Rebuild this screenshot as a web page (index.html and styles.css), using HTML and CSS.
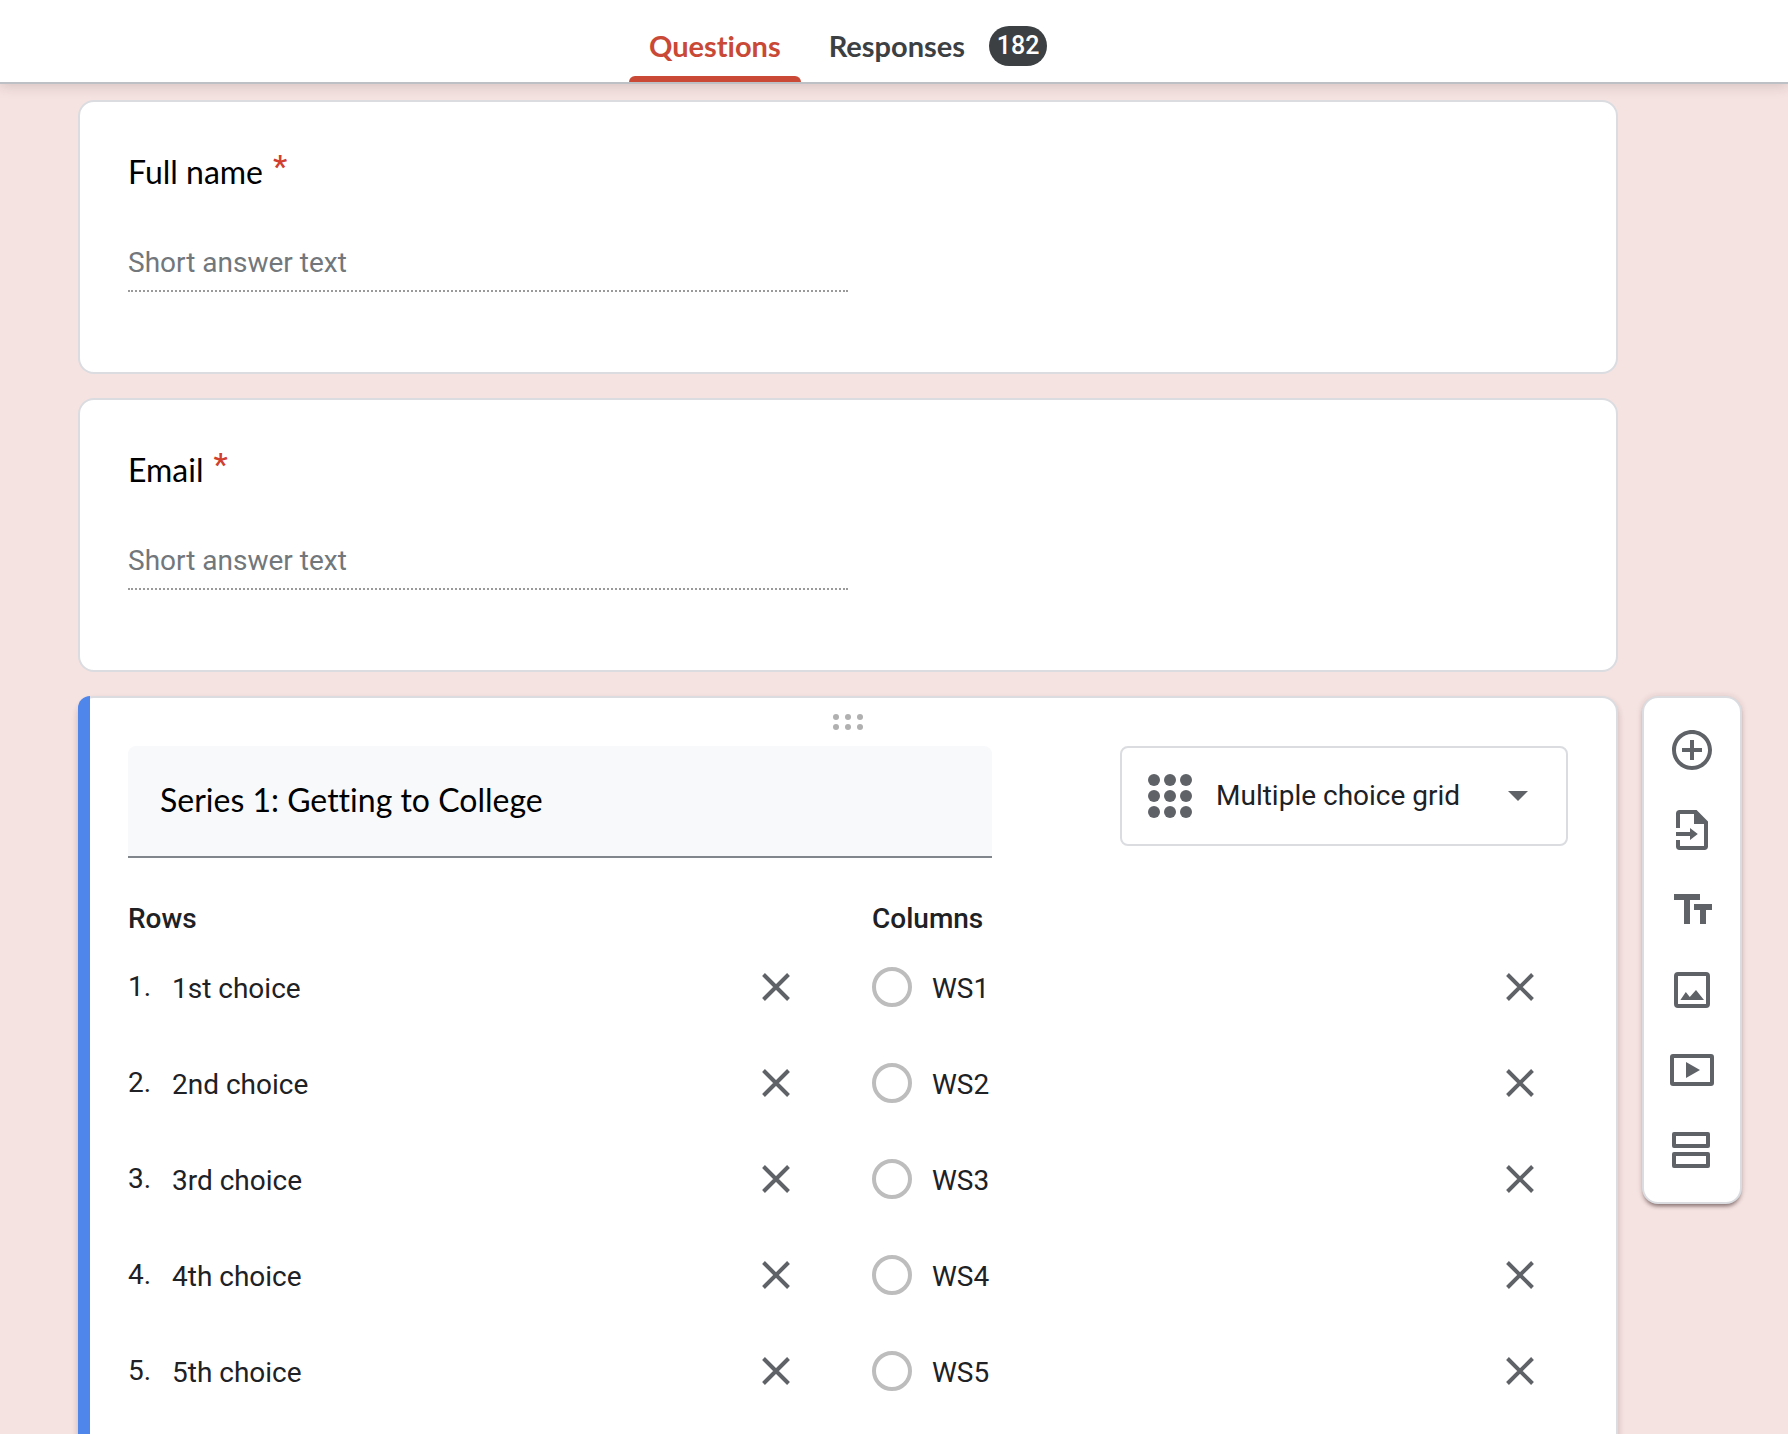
FILE: index.html
```html
<!DOCTYPE html>
<html lang="en">
<head>
<meta charset="utf-8">
<meta name="viewport" content="width=device-width, initial-scale=1">
<title>Form editor</title>
<link rel="stylesheet" href="styles.css">
</head>
<body>
<svg class="sprite" aria-hidden="true">
  <symbol id="close" viewBox="0 0 28 28"><path d="M1.500 1.500l25 25M26.500 1.500l-25 25" fill="none" stroke="currentColor" stroke-width="4"/></symbol>
</svg>

<header class="topbar">
  <nav class="tabs" aria-label="Form sections">
    <a class="tab tab-active" href="#questions" aria-current="page">Questions</a>
    <a class="tab" href="#responses">Responses <span class="badge">182</span></a>
  </nav>
</header>

<main class="editor" id="questions">
  <div class="cards">
    <section class="card">
      <label class="question" for="full-name">Full name <span class="required">*</span></label>
      <input class="short-answer" id="full-name" type="text" placeholder="Short answer text">
    </section>

    <section class="card">
      <label class="question" for="email">Email <span class="required">*</span></label>
      <input class="short-answer" id="email" type="text" placeholder="Short answer text">
    </section>

    <section class="card card-active">
      <button class="drag" type="button" aria-label="Move question">
        <svg width="30" height="16" viewBox="0 0 30 16" fill="#b0b0b0"><circle cx="3" cy="3" r="3"/><circle cx="15" cy="3" r="3"/><circle cx="27" cy="3" r="3"/><circle cx="3" cy="13" r="3"/><circle cx="15" cy="13" r="3"/><circle cx="27" cy="13" r="3"/></svg>
      </button>
      <div class="question-head">
        <input class="title-input" type="text" value="Series 1: Getting to College" aria-label="Question">
        <button class="type-picker" type="button" aria-haspopup="listbox">
          <svg width="44" height="44" viewBox="0 0 44 44" fill="#5f6368"><circle cx="6" cy="6" r="6"/><circle cx="22" cy="6" r="6"/><circle cx="38" cy="6" r="6"/><circle cx="6" cy="22" r="6"/><circle cx="22" cy="22" r="6"/><circle cx="38" cy="22" r="6"/><circle cx="6" cy="38" r="6"/><circle cx="22" cy="38" r="6"/><circle cx="38" cy="38" r="6"/></svg>
          <span class="type-name">Multiple choice grid</span>
          <svg width="20" height="10" viewBox="0 0 20 10" fill="#5f6368"><path d="M0 0h20L10 10z"/></svg>
        </button>
      </div>

      <div class="grid-options">
        <div class="option-list">
          <h2 class="list-title">Rows</h2>
          <div class="option"><span class="number">1.</span><input class="option-text" type="text" value="1st choice" aria-label="Row 1"><button class="remove" type="button" aria-label="Remove row 1"><svg><use href="#close"/></svg></button></div>
          <div class="option"><span class="number">2.</span><input class="option-text" type="text" value="2nd choice" aria-label="Row 2"><button class="remove" type="button" aria-label="Remove row 2"><svg><use href="#close"/></svg></button></div>
          <div class="option"><span class="number">3.</span><input class="option-text" type="text" value="3rd choice" aria-label="Row 3"><button class="remove" type="button" aria-label="Remove row 3"><svg><use href="#close"/></svg></button></div>
          <div class="option"><span class="number">4.</span><input class="option-text" type="text" value="4th choice" aria-label="Row 4"><button class="remove" type="button" aria-label="Remove row 4"><svg><use href="#close"/></svg></button></div>
          <div class="option"><span class="number">5.</span><input class="option-text" type="text" value="5th choice" aria-label="Row 5"><button class="remove" type="button" aria-label="Remove row 5"><svg><use href="#close"/></svg></button></div>
        </div>
        <div class="option-list">
          <h2 class="list-title">Columns</h2>
          <div class="option"><input class="radio" type="radio" name="column" aria-label="WS1"><input class="option-text" type="text" value="WS1" aria-label="Column 1"><button class="remove" type="button" aria-label="Remove column 1"><svg><use href="#close"/></svg></button></div>
          <div class="option"><input class="radio" type="radio" name="column" aria-label="WS2"><input class="option-text" type="text" value="WS2" aria-label="Column 2"><button class="remove" type="button" aria-label="Remove column 2"><svg><use href="#close"/></svg></button></div>
          <div class="option"><input class="radio" type="radio" name="column" aria-label="WS3"><input class="option-text" type="text" value="WS3" aria-label="Column 3"><button class="remove" type="button" aria-label="Remove column 3"><svg><use href="#close"/></svg></button></div>
          <div class="option"><input class="radio" type="radio" name="column" aria-label="WS4"><input class="option-text" type="text" value="WS4" aria-label="Column 4"><button class="remove" type="button" aria-label="Remove column 4"><svg><use href="#close"/></svg></button></div>
          <div class="option"><input class="radio" type="radio" name="column" aria-label="WS5"><input class="option-text" type="text" value="WS5" aria-label="Column 5"><button class="remove" type="button" aria-label="Remove column 5"><svg><use href="#close"/></svg></button></div>
        </div>
      </div>
    </section>
  </div>

  <aside class="toolbar" aria-label="Add to form">
    <button class="tool" type="button" aria-label="Add question">
      <svg viewBox="0 0 24 24"><path d="M13 7h-2v4H7v2h4v4h2v-4h4v-2h-4V7zm-1-5C6.480 2 2 6.480 2 12s4.480 10 10 10 10-4.480 10-10S17.520 2 12 2zm0 18c-4.410 0-8-3.590-8-8s3.590-8 8-8 8 3.590 8 8-3.590 8-8 8z"/></svg>
    </button>
    <button class="tool" type="button" aria-label="Import questions">
      <svg viewBox="0 0 24 24"><path d="M14.300 2H5.700C4.700 2 4 2.700 4 3.700V11h2V4h7v5h5v11H6v-3H4v3.300c0 1 .7 1.700 1.700 1.700h12.600c1 0 1.700-.7 1.700-1.700V7.800zM4 13h7v-2l3.900 3-3.900 3v-2H4z"/></svg>
    </button>
    <button class="tool" type="button" aria-label="Add title and description">
      <svg viewBox="0 0 24 24"><path d="M3 4v3h5v12h3V7h5V4zM13 9v3h3v7h3v-7h3V9z"/></svg>
    </button>
    <button class="tool" type="button" aria-label="Add image">
      <svg viewBox="0 0 24 24"><path fill-rule="evenodd" d="M5 3h14a2 2 0 0 1 2 2v14a2 2 0 0 1-2 2H5a2 2 0 0 1-2-2V5a2 2 0 0 1 2-2zm0 2v14h14V5zM6.200 17h11.800L14 12l-3.100 3.500L8.900 13z"/></svg>
    </button>
    <button class="tool" type="button" aria-label="Add video">
      <svg viewBox="0 0 24 24"><path fill-rule="evenodd" d="M2.500 4h19A1.500 1.500 0 0 1 23 5.500v13a1.500 1.500 0 0 1-1.500 1.500h-19A1.500 1.500 0 0 1 1 18.500v-13A1.500 1.500 0 0 1 2.500 4zM3 6v12h18V6zm6 2l7 4-7 4z"/></svg>
    </button>
    <button class="tool" type="button" aria-label="Add section">
      <svg viewBox="0 0 24 24"><path fill-rule="evenodd" d="M3 3h17a1 1 0 0 1 1 1v6a1 1 0 0 1-1 1H3a1 1 0 0 1-1-1V4a1 1 0 0 1 1-1zm1 2v4h15V5zM3 13h17a1 1 0 0 1 1 1v6a1 1 0 0 1-1 1H3a1 1 0 0 1-1-1v-6a1 1 0 0 1 1-1zm1 2v4h15v-4z"/></svg>
    </button>
  </aside>
</main>
</body>
</html>
```

FILE: styles.css
```css
* {
  box-sizing: border-box;
}

body {
  display: flex;
  flex-direction: column;
  height: 100vh;
  margin: 0;
  background: #f5e3e1;
  color: #202124;
  font-family: Roboto, "Liberation Sans", sans-serif;
  font-size: 28px;
  line-height: 40px;
}

button,
input {
  margin: 0;
  padding: 0;
  border: 0;
  background: none;
  color: inherit;
  font: inherit;
}

button {
  cursor: pointer;
}

svg {
  display: block;
}

.sprite {
  position: absolute;
  width: 0;
  height: 0;
}

/* Top bar */
.topbar {
  z-index: 1;
  flex: none;
  display: flex;
  justify-content: center;
  padding: 0 170px 0 78px;
  border-bottom: 2px solid #bdc1c6;
  background: #fff;
  box-shadow: 0 2px 12px rgba(60, 40, 40, 0.18);
}

.tabs {
  display: flex;
  gap: 8px;
}

.tab {
  display: flex;
  align-items: center;
  gap: 24px;
  height: 82px;
  padding: 10px 20px 0;
  color: #3c4043;
  font-family: Lato, Roboto, sans-serif;
  font-size: 29px;
  font-variant-ligatures: none;
  font-weight: 700;
  text-decoration: none;
}

.tab-active {
  position: relative;
  color: #c94936;
}

.tab-active::after {
  content: "";
  position: absolute;
  right: 0;
  bottom: 0;
  left: 0;
  height: 6px;
  border-radius: 6px 6px 0 0;
  background: #c94936;
}

.badge {
  min-width: 58px;
  border-radius: 20px;
  background: #3c4043;
  color: #fff;
  font-family: Roboto, sans-serif;
  font-size: 25px;
  font-weight: 500;
  text-align: center;
}

/* Editor */
.editor {
  flex: 1;
  display: flex;
  align-items: flex-start;
  gap: 24px;
  min-height: 0;
  padding: 16px 46px 0 78px;
  overflow-y: auto;
  scrollbar-width: none;
}

.cards {
  flex: 1;
  display: flex;
  flex-direction: column;
  gap: 24px;
  min-width: 0;
}

.card {
  padding: 48px 48px 80px;
  border: 2px solid #dadce0;
  border-radius: 16px;
  background: #fff;
}

.question {
  display: flex;
  gap: 10px;
  height: 48px;
  color: #000;
  font-family: Lato, Roboto, sans-serif;
  font-size: 32px;
  line-height: 44px;
}

.required {
  color: #d03f2f;
  font-family: Roboto, sans-serif;
  font-weight: 500;
  line-height: 32px;
}

.short-answer {
  display: block;
  width: 50%;
  height: 62px;
  margin-top: 32px;
  padding-top: 4px;
  border-bottom: 2px dotted #9a9a9a;
}

.short-answer::placeholder {
  color: #72777c;
  opacity: 1;
}

.card-active {
  position: relative;
  padding-top: 0;
  box-shadow: 0 4px 6px rgba(60, 30, 30, 0.24);
}

.card-active::before {
  content: "";
  position: absolute;
  top: -2px;
  bottom: -2px;
  left: -2px;
  width: 12px;
  border-radius: 12px 0 0 12px;
  background: #4f86ec;
}

.drag {
  display: flex;
  justify-content: center;
  width: 100%;
  height: 48px;
  padding-top: 16px;
}

.question-head {
  display: flex;
  align-items: flex-start;
  justify-content: space-between;
}

.title-input {
  width: 60%;
  height: 112px;
  padding: 0 32px 4px;
  border-bottom: 2px solid #80868b;
  border-radius: 8px 8px 0 0;
  background: #f8f9fb;
  color: #000;
  font-family: Lato, Roboto, sans-serif;
  font-size: 32px;
  font-variant-ligatures: none;
}

.type-picker {
  display: flex;
  align-items: center;
  width: 448px;
  height: 100px;
  padding: 0 38px 0 26px;
  border: 2px solid #dadce0;
  border-radius: 8px;
}

.type-name {
  flex: 1;
  padding-left: 24px;
  text-align: left;
}

.grid-options {
  display: grid;
  grid-template-columns: 1fr 1fr;
  gap: 48px;
  padding-top: 41px;
}

.list-title {
  margin: 0;
  font-size: 28px;
  font-weight: 500;
  line-height: 40px;
}

.option {
  display: flex;
  align-items: center;
  height: 96px;
}

.number {
  width: 44px;
}

.option-text {
  flex: 1;
  min-width: 0;
  height: 48px;
  padding-top: 2px;
}

.radio {
  appearance: none;
  width: 40px;
  height: 40px;
  margin-right: 20px;
  border: 4px solid #bdbdbd;
  border-radius: 50%;
}

.radio:checked {
  border-color: #4f86ec;
}

.remove {
  display: flex;
  align-items: center;
  justify-content: center;
  width: 96px;
  height: 96px;
  color: #5f6368;
}

.remove svg {
  width: 28px;
  height: 28px;
}

/* Side toolbar */
.toolbar {
  flex: none;
  width: 100px;
  margin-top: 596px;
  padding: 12px 0;
  border: 2px solid #dadce0;
  border-radius: 16px;
  background: #fff;
  box-shadow: 0 4px 4px -2px rgba(60, 40, 40, 0.6), 0 0 6px rgba(60, 30, 30, 0.14);
}

.tool {
  display: flex;
  align-items: center;
  justify-content: center;
  width: 100%;
  height: 80px;
}

.tool svg {
  width: 48px;
  height: 48px;
  fill: #5f6368;
}
```
